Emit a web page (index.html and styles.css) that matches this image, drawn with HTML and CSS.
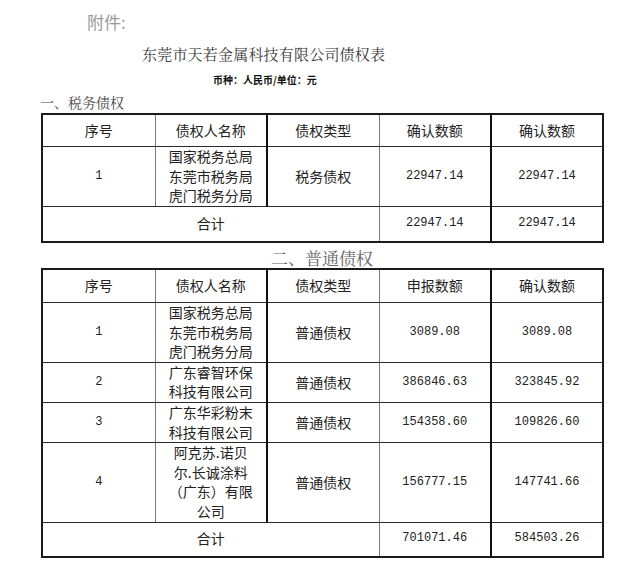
FILE: index.html
```html
<!DOCTYPE html>
<html lang="zh-CN">
<head>
<meta charset="utf-8">
<title>东莞市天若金属科技有限公司债权表</title>
<link rel="stylesheet" href="styles.css">
</head>
<body>
<main class="page">
  <p class="attach">附件:</p>
  <h1 class="title">东莞市天若金属科技有限公司债权表</h1>
  <p class="unit">币种：人民币/单位：元</p>
  <h2 class="sec sec-left">一、税务债权</h2>
  <table class="debt">
    <colgroup><col class="c1"><col class="c2"><col class="c3"><col class="c4"><col class="c5"></colgroup>
    <tr class="head">
      <td class="k1">序号</td><td class="k2">债权人名称</td><td class="k3">债权类型</td><td class="k4">确认数额</td><td class="k5">确认数额</td>
    </tr>
    <tr class="row row-tall">
      <td class="k1 num">1</td><td class="k2">国家税务总局<br>东莞市税务局<br>虎门税务分局</td><td class="k3">税务债权</td><td class="k4 num">22947.14</td><td class="k5 num">22947.14</td>
    </tr>
    <tr class="total">
      <td class="k3" colspan="3">合计</td><td class="k4 num">22947.14</td><td class="k5 num">22947.14</td>
    </tr>
  </table>
  <h2 class="sec sec-center">二、普通债权</h2>
  <table class="debt">
    <colgroup><col class="c1"><col class="c2"><col class="c3"><col class="c4"><col class="c5"></colgroup>
    <tr class="head head2">
      <td class="k1">序号</td><td class="k2">债权人名称</td><td class="k3">债权类型</td><td class="k4">申报数额</td><td class="k5">确认数额</td>
    </tr>
    <tr class="row">
      <td class="k1 num">1</td><td class="k2">国家税务总局<br>东莞市税务局<br>虎门税务分局</td><td class="k3">普通债权</td><td class="k4 num">3089.08</td><td class="k5 num">3089.08</td>
    </tr>
    <tr class="row">
      <td class="k1 num">2</td><td class="k2">广东睿智环保<br>科技有限公司</td><td class="k3">普通债权</td><td class="k4 num">386846.63</td><td class="k5 num">323845.92</td>
    </tr>
    <tr class="row">
      <td class="k1 num">3</td><td class="k2">广东华彩粉末<br>科技有限公司</td><td class="k3">普通债权</td><td class="k4 num">154358.60</td><td class="k5 num">109826.60</td>
    </tr>
    <tr class="row">
      <td class="k1 num">4</td><td class="k2">阿克苏.诺贝<br>尔.长诚涂料<br>（广东）有限<br>公司</td><td class="k3">普通债权</td><td class="k4 num">156777.15</td><td class="k5 num">147741.66</td>
    </tr>
    <tr class="total total2">
      <td class="k3" colspan="3">合计</td><td class="k4 num">701071.46</td><td class="k5 num">584503.26</td>
    </tr>
  </table>
</main>
</body>
</html>
```

FILE: styles.css
```css
html, body {
  margin: 0;
  padding: 0;
  background: #ffffff;
}

.page {
  width: 640px;
  padding: 12px 0 0 0;
  font-family: "Noto Sans CJK SC", "Liberation Sans", sans-serif;
  color: #222;
}

.attach {
  margin: 0;
  padding-left: 87px;
  font-size: 17px;
  line-height: 20px;
  color: #9a9a9a;
}

.title {
  margin: 12px 0 0 0;
  padding-left: 142px;
  font-family: "Noto Serif CJK SC", "Noto Sans CJK SC", serif;
  font-size: 15px;
  line-height: 20px;
  font-weight: normal;
  letter-spacing: 0.2px;
  color: #3a3a3a;
}

.unit {
  margin: 10px 0 0 0;
  padding-left: 213px;
  font-size: 10px;
  line-height: 12px;
  font-weight: bold;
  color: #111;
}

.sec {
  margin: 0;
  font-family: "Noto Serif CJK SC", "Noto Sans CJK SC", serif;
  font-weight: normal;
  color: #4a4a4a;
}

.sec-left {
  margin-top: 7px;
  margin-bottom: 2px;
  padding-left: 40px;
  font-size: 14px;
  line-height: 18px;
}

.sec-center {
  margin-top: 5px;
  margin-bottom: 0;
  width: 640px;
  padding-left: 2px;
  text-align: center;
  font-size: 17px;
  line-height: 20px;
  color: #666;
}

.debt {
  margin-left: 41px;
  width: 561px;
  border-collapse: collapse;
  table-layout: fixed;
  border: 2px solid #1a1a1a;
}

.c1 { width: 113px; }
.c2 { width: 112px; }
.c3 { width: 112px; }
.c4 { width: 112px; }
.c5 { width: 112px; }

.debt td {
  padding: 0;
  text-align: center;
  vertical-align: middle;
  font-size: 14px;
  line-height: 19.6px;
  color: #222;
  border-top: 1px solid #2a2a2a;
  border-bottom: 1px solid #2a2a2a;
}

.debt td.k1 { border-right: 1px solid #7a7a7a; }
.debt td.k2 { border-right: 2px solid #111; }
.debt td.k3 { border-right: 1px solid #7a7a7a; }
.debt td.k4 { border-right: 2px solid #111; }

.debt td.num {
  font-family: "Liberation Mono", "DejaVu Sans Mono", monospace;
  font-size: 12px;
}

.head td {
  height: 31px;
}

.head2 td {
  height: 32px;
}

.row-tall td {
  height: 59px;
}

.total td {
  height: 34px;
}

.total2 td {
  height: 33px;
}
```
